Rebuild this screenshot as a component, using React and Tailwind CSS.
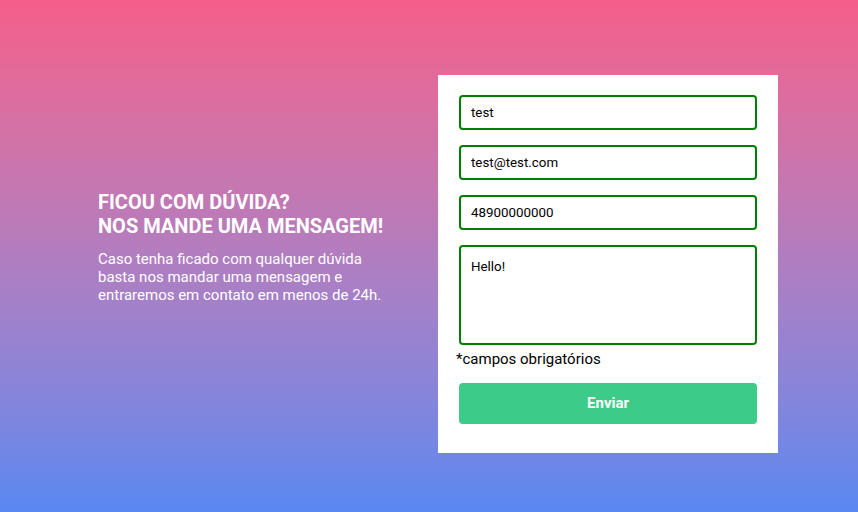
export default function App() {
  return (
    <div className="w-[858px] h-[512px] flex items-center bg-gradient-to-b from-[#f55e89] to-[#5788f1] font-['Roboto',sans-serif]">
      <div className="w-[340px] ml-[98px] mb-[18px] text-white">
        <h2 className="text-[20px] font-bold leading-[24px] uppercase">
          Ficou com dúvida?
          <br />
          Nos mande uma mensagem!
        </h2>
        <p className="mt-[12px] text-[15px] leading-[18px] w-[290px]">
          Caso tenha ficado com qualquer dúvida basta nos mandar uma mensagem e entraremos em contato em menos de 24h.
        </p>
      </div>
      <form className="w-[340px] mt-[16px] bg-white pt-[20px] pb-[29px] px-[21px] flex flex-col">
        <input
          defaultValue="test"
          className="h-[35px] border-2 border-[#008000] rounded-[4px] px-[10px] text-[13.33px] text-black outline-none"
        />
        <input
          defaultValue="test@test.com"
          className="mt-[15px] h-[35px] border-2 border-[#008000] rounded-[4px] px-[10px] text-[13.33px] text-black outline-none"
        />
        <input
          defaultValue="48900000000"
          className="mt-[15px] h-[35px] border-2 border-[#008000] rounded-[4px] px-[10px] text-[13.33px] text-black outline-none"
        />
        <textarea
          defaultValue="Hello!"
          className="mt-[15px] h-[100px] border-2 border-[#008000] rounded-[4px] px-[10px] py-[10px] text-[13.33px] text-black outline-none resize-none"
        />
        <span className="-ml-[3px] mt-[5px] text-[15px] leading-[18px] text-black">*campos obrigatórios</span>
        <button
          type="button"
          className="mt-[15px] h-[41px] rounded-[4px] bg-[#3ccb88] text-white font-bold text-[15px]"
        >
          Enviar
        </button>
      </form>
    </div>
  );
}
